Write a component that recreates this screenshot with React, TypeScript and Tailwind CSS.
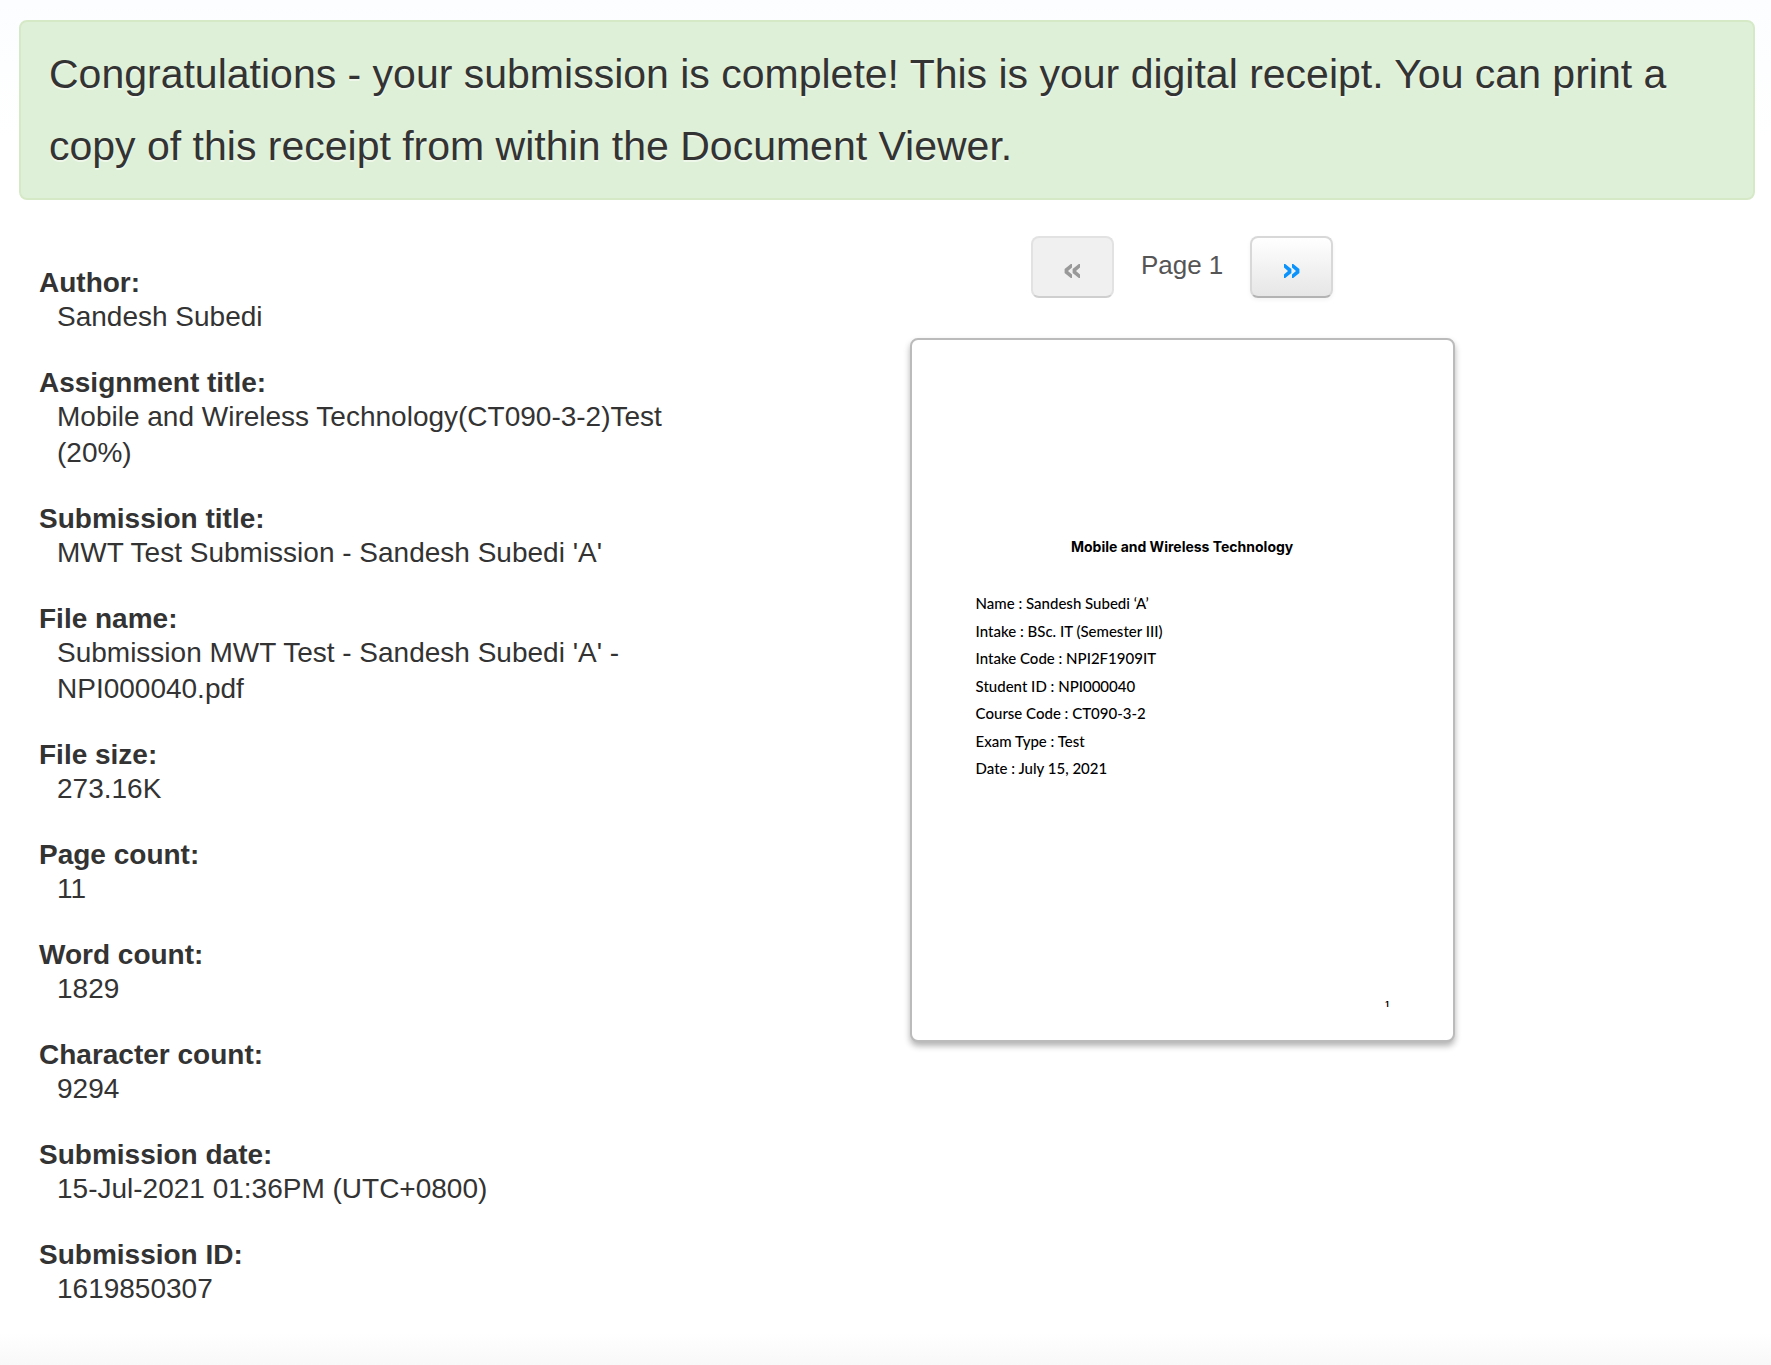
type Detail = { label: string; value: string };

const details: Detail[] = [
  { label: "Author:", value: "Sandesh Subedi" },
  { label: "Assignment title:", value: "Mobile and Wireless Technology(CT090-3-2)Test (20%)" },
  { label: "Submission title:", value: "MWT Test Submission - Sandesh Subedi 'A'" },
  { label: "File name:", value: "Submission MWT Test - Sandesh Subedi 'A' - NPI000040.pdf" },
  { label: "File size:", value: "273.16K" },
  { label: "Page count:", value: "11" },
  { label: "Word count:", value: "1829" },
  { label: "Character count:", value: "9294" },
  { label: "Submission date:", value: "15-Jul-2021 01:36PM (UTC+0800)" },
  { label: "Submission ID:", value: "1619850307" },
];

const coverLines = [
  "Name : Sandesh Subedi ‘A’",
  "Intake : BSc. IT (Semester III)",
  "Intake Code : NPI2F1909IT",
  "Student ID : NPI000040",
  "Course Code : CT090-3-2",
  "Exam Type : Test",
  "Date : July 15, 2021",
];

function Banner() {
  return (
    <div
      role="status"
      className="rounded-lg border-2 border-[#d6e9c6] bg-[#dff0d8] px-7 py-4 text-[41px] leading-[72px] text-[#333] [text-shadow:0_2px_0_rgba(255,255,255,0.5)]"
    >
      Congratulations - your submission is complete! This is your digital receipt. You can print a
      copy of this receipt from within the Document Viewer.
    </div>
  );
}

function DetailList() {
  return (
    <dl className="flex flex-col gap-8 pt-[67px] pl-5 text-[28px] text-[#333]">
      {details.map((d) => (
        <div key={d.label}>
          <dt className="leading-8 font-bold">{d.label}</dt>
          <dd className="pl-[18px] leading-9">{d.value}</dd>
        </div>
      ))}
    </dl>
  );
}

function Chevrons({ flipped }: { flipped?: boolean }) {
  return (
    <svg
      viewBox="0 0 16 14"
      className={flipped ? "mt-2 h-3.5 w-4 -scale-x-100" : "mt-2 h-3.5 w-4"}
      fill="currentColor"
      aria-hidden="true"
    >
      <path d="M0 0H1.2L7.4 5V9L1.2 14H0V10.6L4 7L0 3.4Z" />
      <path d="M8 0H9.2L15.4 5V9L9.2 14H8V10.6L12 7L8 3.4Z" />
    </svg>
  );
}

function Pager() {
  return (
    <nav aria-label="Document pages" className="flex items-center justify-center gap-[27px]">
      <button
        type="button"
        disabled
        aria-label="Previous page"
        className="flex h-[62px] w-[83px] items-center justify-center rounded-lg border-2 border-[#e2e2e2] border-b-[#cfcfcf] bg-[#f0f0f0] text-[#999]"
      >
        <Chevrons flipped />
      </button>
      <span className="pb-1 text-[26px] leading-9 text-[#555]">Page 1</span>
      <button
        type="button"
        aria-label="Next page"
        className="flex h-[62px] w-[83px] items-center justify-center rounded-lg border-2 border-[#d8d8d8] border-b-[#b3b3b3] bg-linear-to-b from-white to-[#e6e6e6] text-[#0a93fd] shadow-[0_2px_4px_rgba(0,0,0,0.05)]"
      >
        <Chevrons />
      </button>
    </nav>
  );
}

function PagePreview() {
  return (
    <article className="mt-10 flex min-h-[704px] w-full max-w-[545px] flex-col rounded-lg border-2 border-[#bbb] bg-white px-16 pb-[30px] text-black shadow-[0_4px_6px_rgba(0,0,0,0.3)]">
      <h1 className="mt-[197px] text-center font-['Inter'] text-[14px] leading-5 font-bold">
        Mobile and Wireless Technology
      </h1>
      <ul className="mt-9 flex h-[185px] flex-col justify-between font-['Lato'] text-[15px] leading-5 font-medium">
        {coverLines.map((line) => (
          <li key={line}>{line}</li>
        ))}
      </ul>
      <span className="mt-auto self-end font-['Inter'] text-[8px] leading-3 font-bold">1</span>
    </article>
  );
}

export default function App() {
  return (
    <div className="flex min-h-screen flex-col bg-linear-to-b from-[#fbfdff] to-white to-10% font-['Liberation_Sans',Arial,sans-serif]">
      <main className="grow px-4 pt-5 pl-[19px]">
        <Banner />
        <div className="grid grid-cols-[40%_54%]">
          <DetailList />
          <section className="flex flex-col items-center pt-9">
            <Pager />
            <PagePreview />
          </section>
        </div>
      </main>
      <div className="h-8 bg-linear-to-b from-white to-[#f8f8f8]" />
    </div>
  );
}
